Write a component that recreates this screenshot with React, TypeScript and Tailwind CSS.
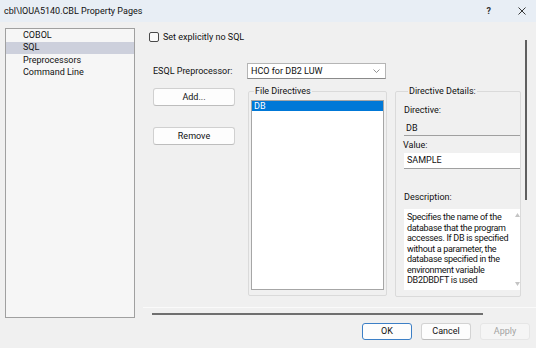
import React from 'react'

const TREE = ['COBOL', 'SQL', 'Preprocessors', 'Command Line']

function Btn({ label, className = '' }: { label: string; className?: string }) {
  return (
    <div
      className={`flex items-center justify-center rounded-[3px] border border-[#d0d0d0] border-b-[#bdbdbd] bg-[#fdfdfd] ${className}`}
    >
      {label}
    </div>
  )
}

export default function App() {
  return (
    <div
      className="flex h-[348px] w-[536px] flex-col overflow-hidden bg-[#f0f0f0] text-[9px] leading-none text-[#111]"
      style={{ fontFamily: 'Roboto, "Noto Sans", sans-serif' }}
    >
      {/* title bar */}
      <div className="flex h-[22px] shrink-0 items-center bg-[#e8eef5] pl-[4px]">
        <span>cbl\IOUA5140.CBL Property Pages</span>
        <span className="ml-auto mr-[27px] text-[9px] font-bold text-[#333]">?</span>
        <svg width="8" height="8" viewBox="0 0 8 8" className="mr-[10px]">
          <path d="M0.5 0.5 L7.5 7.5 M7.5 0.5 L0.5 7.5" stroke="#222" strokeWidth="0.9" />
        </svg>
      </div>

      <div className="flex pt-[6px]">
        {/* page tree */}
        <div className="ml-[5px] h-[290px] w-[130px] shrink-0 border border-[#a0a0a0] bg-[#f6f6f6]">
          {TREE.map((t) => (
            <div
              key={t}
              className={`flex h-[12.5px] items-center pl-[17px] ${t === 'SQL' ? 'bg-[#cdd0dc]' : ''}`}
            >
              {t}
            </div>
          ))}
        </div>

        {/* page content */}
        <div className="flex flex-1 flex-col">
          <div className="relative h-[279px]">
            <div className="mt-[4px] flex items-center pl-[14px]">
              <div className="h-[10px] w-[10px] rounded-[2px] border border-[#4a4a4a] bg-[#fbfbfb]" />
              <span className="ml-[4px]">Set explicitly no SQL</span>
            </div>

            <div className="mt-[21px] flex h-[16px] items-center">
              <span className="w-[112px] pl-[18px]">ESQL Preprocessor:</span>
              <div className="flex h-[16px] w-[139px] items-center border border-[#b5b5b5] border-b-[#8a8a8a] bg-white pl-[3px]">
                HCO for DB2 LUW
                <svg width="7" height="4" viewBox="0 0 7 4" className="ml-auto mr-[5px]">
                  <path d="M0.5 0.5 L3.5 3.5 L6.5 0.5" fill="none" stroke="#777" strokeWidth="0.8" />
                </svg>
              </div>
            </div>

            <div className="mt-[7px] flex">
              {/* buttons */}
              <div className="ml-[18px] flex w-[82px] flex-col">
                <Btn label="Add..." className="mt-[2px] h-[18px]" />
                <Btn label="Remove" className="mt-[21px] h-[18px]" />
              </div>

              {/* file directives */}
              <fieldset className="ml-[13px] h-[210px] w-[139px] rounded-[2px] border border-[#dadada] px-[2px]">
                <legend className="ml-[3px] px-[1px] leading-[10px]">File Directives</legend>
                <div className="mt-[4px] h-[190px] border border-[#a6a6a6] bg-white">
                  <div className="flex h-[10px] items-center bg-[#0078d7] pl-[2px] text-white">DB</div>
                </div>
              </fieldset>

              {/* directive details */}
              <fieldset className="ml-[8px] h-[211px] w-[126px] rounded-[2px] border border-[#dadada] pl-[8px]">
                <legend className="ml-[4px] px-[1px] leading-[10px]">Directive Details:</legend>
                <div className="mt-[10px]">Directive:</div>
                <div className="mt-[6px] flex h-[15px] items-center border-b border-[#a0a0a0] pl-[2px]">DB</div>
                <div className="mt-[5px] -ml-[1px]">Value:</div>
                <div className="mt-[3px] flex h-[16px] items-center border-b border-[#a0a0a0] bg-white pl-[3px]">
                  SAMPLE
                </div>
                <div className="mt-[24px]">Description:</div>
                <div className="mt-[7px] flex h-[81px] bg-white">
                  <p className="w-[110px] pl-[3px] pt-[3px] text-[9px] leading-[10.5px] tracking-[-0.3px]">
                    Specifies the name of the database that the program accesses. If DB is specified
                    without a parameter, the database specified in the environment variable
                    DB2DBDFT is used
                  </p>
                  <div className="flex flex-1 flex-col items-center justify-between py-[4px]">
                    <svg width="5" height="4" viewBox="0 0 5 4">
                      <path d="M0 4 L2.5 0 L5 4 Z" fill="#c4c4c4" />
                    </svg>
                    <svg width="5" height="4" viewBox="0 0 5 4">
                      <path d="M0 0 L2.5 4 L5 0 Z" fill="#c4c4c4" />
                    </svg>
                  </div>
                </div>
              </fieldset>
            </div>

            {/* vertical scrollbar thumb */}
            <div className="absolute left-[390px] top-[12px] h-[160px] w-[2px] bg-[#5f5f5f]" />
          </div>

          <div className="ml-[8px] h-px bg-[#fafafa]" />
          <div className="ml-[17px] mt-[5px] h-[2px] w-[331px] bg-[#6f6f6f]" />
        </div>
      </div>

      {/* dialog buttons */}
      <div className="mt-[5px] flex justify-end gap-[9px] pr-[6px]">
        <div className="flex h-[17px] w-[50px] items-center justify-center rounded-[3px] border border-[#3c7fc6] bg-[#fdfdfd]">
          OK
        </div>
        <div className="flex h-[17px] w-[50px] items-center justify-center rounded-[3px] border border-[#d3d3d3] border-b-[#bcbcbc] bg-[#fdfdfd]">
          Cancel
        </div>
        <div className="flex h-[17px] w-[50px] items-center justify-center rounded-[3px] border border-[#e6e6e6] bg-[#f5f5f5] text-[#a3a3a3]">
          Apply
        </div>
      </div>
    </div>
  )
}
